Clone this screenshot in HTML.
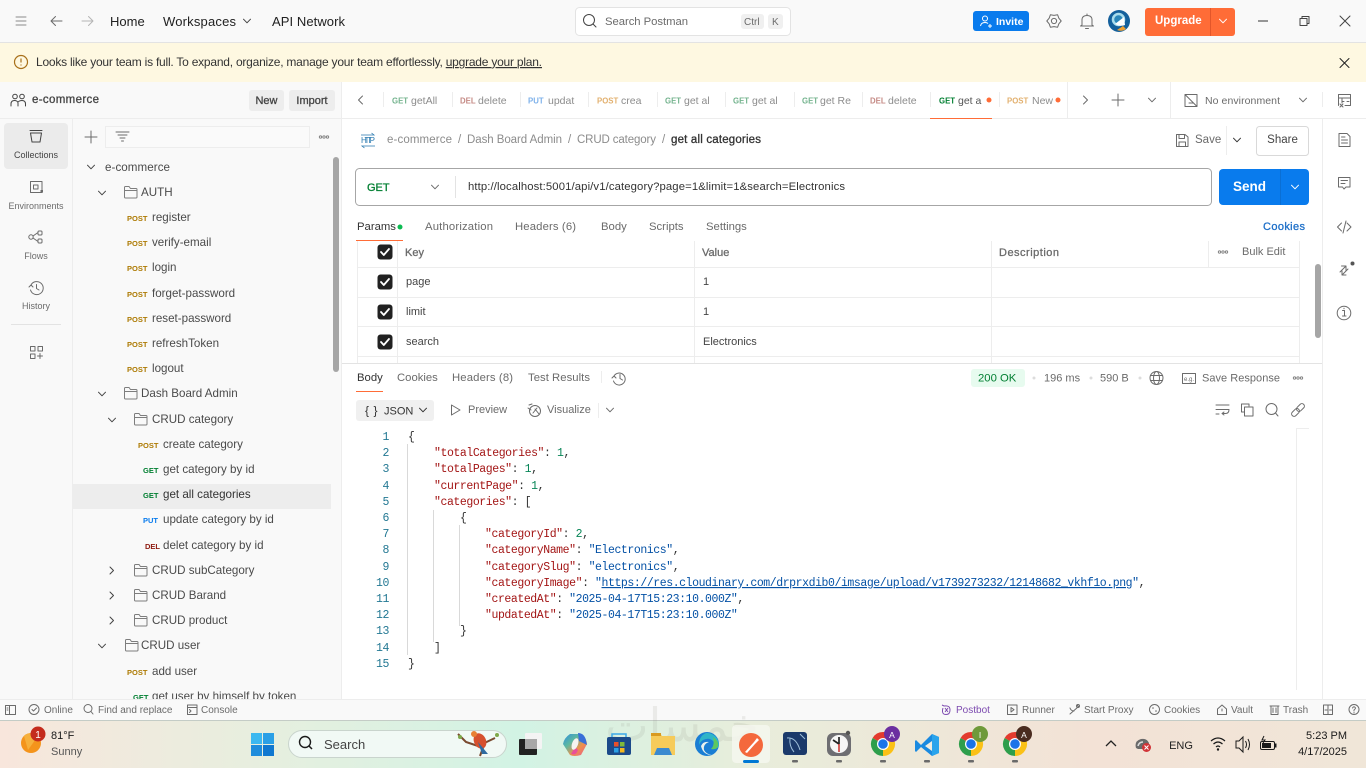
<!DOCTYPE html>
<html lang="en"><head><meta charset="utf-8"><title>Postman</title>
<style>
html,body{margin:0;padding:0;width:1366px;height:768px;overflow:hidden;background:#fff}
svg{display:block;font-family:"Liberation Sans",sans-serif}
.i{fill:none;stroke:#6b6b6b;stroke-width:1;stroke-linecap:round;stroke-linejoin:round}
.d{fill:none;stroke:#444;stroke-width:1;stroke-linecap:round;stroke-linejoin:round}
.med{stroke-width:.3px}
.tree{fill:#4a4a4a;font-size:11.6px}
.m{font-size:7.5px;font-weight:bold}
.post{fill:#ad7a03}.get{fill:#007f31}.put{fill:#097bed}.del{fill:#8e1a10}
.tab{font-size:10.5px;fill:#8c8c8c}.tm{font-size:7.8px;font-weight:bold}
.st{font-size:10px;fill:#6b6b6b}
.rail{font-size:9px;fill:#6b6b6b;text-anchor:middle}
.c{font-family:"Liberation Mono",monospace;font-size:11.5px;letter-spacing:-.43px}
.k{fill:#a31515}.s{fill:#0451a5}.n{fill:#098658}.p{fill:#333}
.ln{fill:#237893;text-anchor:end}
.line{stroke:#ededed;stroke-width:1}
</style></head><body>
<svg width="1366" height="768" viewBox="0 0 1366 768" xmlns="http://www.w3.org/2000/svg">
<defs>
<path id="chev" d="M-3.5 -1.8L0 1.8L3.5 -1.8" fill="none" stroke-linecap="round" stroke-linejoin="round"/>
<linearGradient id="tb" x1="0" x2="1" y1="0" y2="0"><stop offset="0" stop-color="#f8e6dc"/><stop offset=".2" stop-color="#e6efdf"/><stop offset=".38" stop-color="#d2f3e4"/><stop offset=".55" stop-color="#e8eddb"/><stop offset=".8" stop-color="#f3e2d6"/><stop offset="1" stop-color="#f0e6d8"/></linearGradient>
<linearGradient id="cop" x1="0" x2="1" y1="0" y2="1"><stop offset="0" stop-color="#2f8fe0"/><stop offset=".35" stop-color="#5cb8a0"/><stop offset=".65" stop-color="#f0904a"/><stop offset="1" stop-color="#e8559a"/></linearGradient>
<g id="folder"><path d="M0.5 3V1.5Q0.5 .5 1.5 .5H5L6.5 2.5H12Q13 2.5 13 3.5V11Q13 12 12 12H1.5Q.5 12 .5 11Z M.5 4.5H13" fill="none" stroke="#7d7d7d" stroke-width="1"/></g>
<g id="chrome"><path d="M0 0L-10.400 -6A12 12 0 0 1 10.400 -6Z" fill="#e33b2e"/><path d="M0 0L10.400 -6A12 12 0 0 1 0 12Z" fill="#fbc116"/><path d="M0 0L0 12A12 12 0 0 1 -10.400 -6Z" fill="#2e9e4b"/><circle r="6" fill="#fff"/><circle r="4.800" fill="#1a73e8"/></g>
<g id="check"><rect x="-7.500" y="-7.500" width="15" height="15" rx="3" fill="#212121"/><path d="M-4 0L-1.200 3L4 -3" fill="none" stroke="#fff" stroke-width="1.800" stroke-linecap="round" stroke-linejoin="round"/></g>
<g id="dots"><circle cx="-3.500" r="1.200" fill="none" stroke="#7d7d7d" stroke-width=".9"/><circle r="1.200" fill="none" stroke="#7d7d7d" stroke-width=".9"/><circle cx="3.500" r="1.200" fill="none" stroke="#7d7d7d" stroke-width=".9"/></g>
</defs>

<!-- backgrounds -->
<rect width="1366" height="768" fill="#fff"/>
<rect width="1366" height="42" fill="#f9f9f9"/>
<rect y="42" width="1366" height="1" fill="#e3e3e3"/>
<rect y="43" width="1366" height="39" fill="#fef8e1"/>
<rect y="82" width="341" height="617" fill="#f9f9f9"/>
<rect y="118" width="1366" height="1" fill="#ededed"/>
<rect x="72" y="119" width="1" height="580" fill="#ededed"/>
<rect x="341" y="82" width="1" height="617" fill="#ededed"/>
<rect x="1322" y="119" width="1" height="580" fill="#ededed"/>

<!-- top bar -->
<path class="i" style="stroke:#8c8c8c" d="M16 17H26M16 21H26M16 25H26"/>
<path class="i" d="M62 21H51M55.500 16.500L51 21L55.500 25.500"/>
<path class="i" style="stroke:#b5b5b5" d="M82 21H93M88.500 16.500L93 21L88.500 25.500"/>
<text x="110" y="26" font-size="13" fill="#212121">Home</text>
<text x="163" y="26" font-size="13" fill="#212121" textLength="73">Workspaces</text>
<use href="#chev" x="247" y="21" stroke="#444"/>
<text x="272" y="26" font-size="13" fill="#212121" textLength="73">API Network</text>
<rect x="575.500" y="7.500" width="215" height="28" rx="4" fill="#fff" stroke="#e3e3e3"/>
<circle cx="589" cy="20" r="5.500" class="d"/><path d="M593 24L596 27" class="d"/>
<text x="605" y="25" font-size="11.300" fill="#6b6b6b" textLength="83">Search Postman</text>
<rect x="741" y="14" width="23" height="15" rx="3" fill="#f0f0f0"/><text x="744" y="25" font-size="10" fill="#6b6b6b">Ctrl</text>
<rect x="768" y="14" width="15" height="15" rx="3" fill="#f0f0f0"/><text x="772" y="25" font-size="10" fill="#6b6b6b">K</text>
<rect x="973" y="11" width="56" height="20" rx="3" fill="#097bed"/>
<circle cx="985" cy="18.500" r="2.500" fill="none" stroke="#fff"/><path d="M980.500 26Q981 22.500 985 22.500Q987 22.500 988 23.500M988 26H992M990 24V28" fill="none" stroke="#fff"/>
<text x="996" y="25" font-size="10.500" font-weight="bold" fill="#fff">Invite</text>
<circle cx="1054" cy="21" r="2.600" class="i"/><path class="i" d="M1061.200 21L1058.850 23.800L1057.600 27.200L1054 26.600L1050.400 27.200L1049.150 23.800L1046.800 21L1049.150 18.200L1050.400 14.800L1054 15.400L1057.600 14.800L1058.850 18.200Z"/>
<path class="i" d="M1082 25V20Q1082 15.500 1087 15.500Q1092 15.500 1092 20V25L1093.500 26H1080.500ZM1085.500 28.500H1088.500M1087 15.500V14"/>
<circle cx="1119" cy="21" r="11" fill="#14609c"/><circle cx="1118.500" cy="19.500" r="5.500" fill="#2a86ba" stroke="#a8dcec" stroke-width="2.500"/><path d="M1115 24L1124 17L1125 25Q1120 27 1115 24Z" fill="#fff"/><path d="M1117 30L1123 26L1126 29Q1122 32 1117 30Z" fill="#f0a030"/>
<rect x="1145" y="8" width="90" height="28" rx="3" fill="#ff6c37"/><rect x="1210" y="8" width="1" height="28" fill="#e2562a"/>
<text x="1155" y="24" font-size="11.500" font-weight="bold" fill="#fff">Upgrade</text>
<use href="#chev" x="1223" y="21" stroke="#fff"/>
<path d="M1258 21H1268" stroke="#333"/>
<path class="d" d="M1300 18.500H1307V25.500H1300ZM1302 18.500V16.500H1309V23.500H1307"/>
<path class="d" d="M1340 16L1350 26M1350 16L1340 26"/>

<!-- banner -->
<circle cx="21" cy="62" r="6.500" fill="none" stroke="#a8701a" stroke-width="1.200"/><path d="M21 58.500V62.500M21 64.500V65.500" stroke="#a8701a" stroke-width="1.200"/>
<text x="36" y="66" font-size="12" fill="#333" textLength="506">Looks like your team is full. To expand, organize, manage your team effortlessly, <tspan text-decoration="underline">upgrade your plan.</tspan></text>
<path d="M1340 58.500L1349 67.500M1349 58.500L1340 67.500" class="d" style="stroke:#212121"/>

<!-- workspace header -->
<circle cx="15" cy="96.500" r="2.300" class="d"/><circle cx="22" cy="96.500" r="2.300" class="d"/><path class="d" d="M11 106V104Q11 100.500 14.500 100.500Q17 100.500 18 102.500V106M18.500 101.500Q20 100.500 22 100.500Q25.500 100.500 25.500 104V106"/>
<text x="32" y="103" font-size="11.500" class="med" stroke="#444" fill="#444" textLength="67">e-commerce</text>
<rect x="249" y="90" width="35" height="21" rx="3" fill="#ededed"/><text x="266.500" y="104" font-size="11" class="med" stroke="#444" fill="#444" text-anchor="middle">New</text>
<rect x="289" y="90" width="46" height="21" rx="3" fill="#ededed"/><text x="312" y="104" font-size="11" class="med" stroke="#444" fill="#444" text-anchor="middle">Import</text>

<!-- tab strip -->
<rect x="342" y="82" width="1024" height="36" fill="#fff"/>
<path class="i" d="M362.500 96L358.500 100L362.500 104"/>
<path stroke="#ededed" d="M383.500 92V107M452.500 92V107M520.500 92V107M588.500 92V107M657.500 92V107M725.500 92V107M794.500 92V107M862.500 92V107M930.500 92V107M999.500 92V107M1067.500 82V118M1170.500 82V118M1322.500 92V107"/>
<text x="392" y="103.500" class="tm" fill="#74b38e">GET</text><text x="411" y="104" class="tab">getAll</text>
<text x="460" y="103.500" class="tm" fill="#c58a85">DEL</text><text x="478" y="104" class="tab">delete</text>
<text x="528" y="103.500" class="tm" fill="#7cb0ea">PUT</text><text x="548" y="104" class="tab">updat</text>
<text x="597" y="103.500" class="tm" fill="#e2b06e">POST</text><text x="621" y="104" class="tab">crea</text>
<text x="665" y="103.500" class="tm" fill="#74b38e">GET</text><text x="684" y="104" class="tab">get al</text>
<text x="733" y="103.500" class="tm" fill="#74b38e">GET</text><text x="752" y="104" class="tab">get al</text>
<text x="802" y="103.500" class="tm" fill="#74b38e">GET</text><text x="820" y="104" class="tab">get Re</text>
<text x="870" y="103.500" class="tm" fill="#c58a85">DEL</text><text x="888" y="104" class="tab">delete</text>
<text x="939" y="103.500" class="tm" fill="#007f31">GET</text><text x="958" y="104" class="tab" style="fill:#555">get a</text><circle cx="989" cy="100" r="2.500" fill="#ff6c37"/>
<text x="1007" y="103.500" class="tm" fill="#e2b06e">POST</text><text x="1032" y="104" class="tab">New</text><circle cx="1058" cy="100" r="2.500" fill="#ff6c37"/>
<rect x="930" y="118" width="62" height="1" fill="#ff6c37"/>
<path class="i" d="M1083.500 96L1087.500 100L1083.500 104"/>
<path class="i" d="M1118 94V106M1112 100H1124"/>
<use href="#chev" x="1152" y="100" stroke="#6b6b6b"/>
<path class="i" d="M1185 94.500H1197V106.500H1185ZM1185 94.500L1197 106.500M1193 103H1189"/>
<text x="1205" y="104" font-size="10.500" fill="#6b6b6b" textLength="75">No environment</text>
<use href="#chev" x="1303" y="100" stroke="#6b6b6b"/>
<path class="i" d="M1338.500 94.500H1350.500V105.500H1345M1338.500 94.500V105.500M1338.500 98H1350.500M1342 101.500H1344M1347 101.500H1349M1342 98V103M1340 104L1343 107M1343 104L1340 107"/>

<!-- rail -->
<rect x="4" y="123" width="64" height="46" rx="4" fill="#ebebeb"/>
<path class="d" d="M30 130.500H42M30.500 133H41.500L40 142H32Z"/>
<text x="36" y="158" class="rail" style="fill:#444">Collections</text>
<path class="i" d="M30.500 181.500H42V191M42 192.500H30.500V181.500M33.500 185H38V189H33.500Z"/><rect x="40.500" y="190" width="2.500" height="2.500" fill="#6b6b6b"/>
<text x="36" y="209" class="rail">Environments</text>
<circle cx="31" cy="237" r="2.200" class="i"/><rect x="38" y="231" width="4" height="4" rx="1" class="i"/><rect x="38" y="239" width="4" height="4" rx="1" class="i"/><path class="i" d="M33 236L38 232.500M33 238L38 241.500"/>
<text x="36" y="259" class="rail">Flows</text>
<path class="i" d="M31 285A6.500 6.500 0 1 1 30.500 290M29 287L31 285L33 287M36.500 284.500V288.500L39 290"/>
<text x="36" y="309" class="rail">History</text>
<rect x="11" y="324" width="50" height="1" fill="#e3e3e3"/>
<path class="i" d="M30.500 346.500H35V351H30.500ZM38 346.500H42.500V351H38ZM30.500 354H35V358.500H30.500ZM40 353.500V358.500M37.500 356H42.500"/>

<!-- secondary toolbar -->
<path class="i" d="M91 131V143M85 137H97"/>
<rect x="105.500" y="126.500" width="204" height="21" fill="#fafafa" stroke="#ededed"/>
<path class="i" d="M116 132H129M118 135H127M120 138H125M121.500 141H123.500"/>
<use href="#dots" x="324" y="137"/>

<!-- tree -->
<rect x="73" y="484" width="258" height="25" fill="#ededed"/>
<use href="#chev" x="91" y="167" stroke="#444"/><text x="105" y="171" class="tree" textLength="65">e-commerce</text>
<use href="#chev" x="102" y="193" stroke="#444"/><use href="#folder" x="124" y="186"/><text x="141" y="196" class="tree">AUTH</text>
<text x="127" y="221" class="m post">POST</text><text x="152" y="221" class="tree">register</text>
<text x="127" y="246" class="m post">POST</text><text x="152" y="246" class="tree">verify-email</text>
<text x="127" y="271" class="m post">POST</text><text x="152" y="271" class="tree">login</text>
<text x="127" y="297" class="m post">POST</text><text x="152" y="297" class="tree">forget-password</text>
<text x="127" y="322" class="m post">POST</text><text x="152" y="322" class="tree">reset-password</text>
<text x="127" y="347" class="m post">POST</text><text x="152" y="347" class="tree">refreshToken</text>
<text x="127" y="372" class="m post">POST</text><text x="152" y="372" class="tree">logout</text>
<use href="#chev" x="102" y="394" stroke="#444"/><use href="#folder" x="124" y="387"/><text x="141" y="397" class="tree">Dash Board Admin</text>
<use href="#chev" x="112" y="420" stroke="#444"/><use href="#folder" x="134" y="413"/><text x="152" y="423" class="tree">CRUD category</text>
<text x="138" y="448" class="m post">POST</text><text x="163" y="448" class="tree">create category</text>
<text x="143" y="473" class="m get">GET</text><text x="163" y="473" class="tree">get category by id</text>
<text x="143" y="498" class="m get">GET</text><text x="163" y="498" class="tree" style="fill:#333">get all categories</text>
<text x="143" y="523" class="m put">PUT</text><text x="163" y="523" class="tree">update category by id</text>
<text x="145" y="549" class="m del">DEL</text><text x="163" y="549" class="tree">delet category by id</text>
<path class="d" d="M110 567L113.500 570.500L110 574"/><use href="#folder" x="134" y="564"/><text x="152" y="574" class="tree">CRUD subCategory</text>
<path class="d" d="M110 592L113.500 595.500L110 599"/><use href="#folder" x="134" y="589"/><text x="152" y="599" class="tree">CRUD Barand</text>
<path class="d" d="M110 617L113.500 620.500L110 624"/><use href="#folder" x="134" y="614"/><text x="152" y="624" class="tree">CRUD product</text>
<use href="#chev" x="102" y="646" stroke="#444"/><use href="#folder" x="125" y="639"/><text x="141" y="649" class="tree">CRUD user</text>
<text x="127" y="675" class="m post">POST</text><text x="152" y="675" class="tree">add user</text>
<text x="133" y="700" class="m get">GET</text><text x="152" y="700" class="tree">get user by himself by token</text>
<rect x="333" y="157" width="6" height="215" rx="3" fill="#a6a6a6"/>

<!-- breadcrumb -->
<text x="361" y="143" font-size="8" fill="#2a7ab0" textLength="14">HTTP</text>
<path d="M361 135H374L371.500 133M375 146H362L364.500 148" fill="none" stroke="#2a7ab0" stroke-width=".8"/>
<g font-size="11.500" fill="#8c8c8c">
<text x="387" y="143" textLength="65">e-commerce</text><text x="458" y="143">/</text>
<text x="467" y="143" textLength="95">Dash Board Admin</text><text x="568" y="143">/</text>
<text x="577" y="143" textLength="79">CRUD category</text><text x="662" y="143">/</text></g>
<text x="671" y="143" font-size="11.500" class="med" stroke="#333" fill="#333" textLength="90">get all categories</text>
<path class="i" d="M1176.500 134.500H1185L1188 137V146.500H1176.500ZM1179 134.500V138.500H1184.500V134.500M1179 146.500V142H1185.500V146.500"/>
<text x="1195" y="143" font-size="11.500" fill="#6b6b6b">Save</text>
<rect x="1226" y="126" width="1" height="29" fill="#ededed"/>
<use href="#chev" x="1237" y="140" stroke="#333"/>
<rect x="1256.500" y="126.500" width="52" height="29" rx="3" fill="#fff" stroke="#d9d9d9"/>
<text x="1282.500" y="143" font-size="11.500" fill="#444" text-anchor="middle">Share</text>

<!-- url bar -->
<rect x="355.500" y="168.500" width="856" height="37" rx="4" fill="#fff" stroke="#a6a6a6"/>
<text x="367" y="191" font-size="11" class="med" stroke="#007f31" fill="#007f31">GET</text>
<use href="#chev" x="435" y="187" stroke="#6b6b6b"/>
<rect x="455" y="176" width="1" height="22" fill="#e3e3e3"/>
<text x="468" y="190" font-size="11.300" fill="#333" textLength="377">http://localhost:5001/api/v1/category?page=1&amp;limit=1&amp;search=Electronics</text>
<rect x="1219" y="169" width="90" height="36" rx="4" fill="#097bed"/><rect x="1280" y="169" width="1" height="36" fill="#0a6fd4"/>
<text x="1233" y="191" font-size="13.500" font-weight="bold" fill="#fff">Send</text>
<use href="#chev" x="1295" y="187" stroke="#fff"/>

<!-- request tabs -->
<g font-size="11.300" fill="#6b6b6b">
<text x="357" y="230" fill="#333">Params</text><circle cx="400" cy="227" r="2.500" fill="#0cbb52"/>
<text x="425" y="230" textLength="68">Authorization</text>
<text x="515" y="230" textLength="61">Headers (6)</text>
<text x="601" y="230">Body</text><text x="649" y="230">Scripts</text><text x="706" y="230">Settings</text></g>
<text x="1263" y="230" font-size="11" class="med" stroke="#1d6fc8" fill="#1d6fc8" textLength="42">Cookies</text>
<rect x="356" y="240" width="47" height="1" fill="#ff6c37"/>

<!-- params table -->
<path class="line" d="M357 267.500H1299M357 297.500H1299M357 326.500H1299M357 356.500H1299M357.500 241V363M397.500 241V363M694.500 241V363M991.500 241V363M1208.500 241V267M1299.500 241V363"/>
<use href="#check" x="385" y="252"/><use href="#check" x="385" y="282"/><use href="#check" x="385" y="312"/><use href="#check" x="385" y="342"/>
<g font-size="11" class="med" stroke="#6b6b6b" fill="#6b6b6b"><text x="405" y="256">Key</text><text x="702" y="256">Value</text><text x="999" y="256" textLength="60">Description</text></g>
<use href="#dots" x="1223" y="252"/>
<text x="1242" y="255" font-size="11" fill="#6b6b6b">Bulk Edit</text>
<g font-size="11" fill="#444"><text x="406" y="285">page</text><text x="703" y="285">1</text>
<text x="406" y="315">limit</text><text x="703" y="315">1</text>
<text x="406" y="345">search</text><text x="703" y="345">Electronics</text></g>
<rect x="1315" y="264" width="6" height="74" rx="3" fill="#a6a6a6"/>

<!-- right icons -->
<path class="i" d="M1339 133.500H1347L1350 136.500V146.500H1339ZM1341.500 137H1345M1341.500 140H1347.500M1341.500 143H1347.500"/>
<path class="i" d="M1338.500 177.500H1350V187H1346L1344 189L1342.500 187H1338.500ZM1341 180.500H1347.500M1341 183.500H1345"/>
<path class="i" d="M1341.500 223L1337.500 227L1341.500 231M1347 223L1351 227L1347 231M1346 221L1343 233"/>
<path class="i" d="M1340 272L1346 266M1341.500 266H1346V270.500M1348 269L1342 275M1342 271V275H1346"/><circle cx="1352.500" cy="263.500" r="2" fill="#555"/>
<circle cx="1344" cy="313" r="6.800" class="i"/><path class="i" d="M1342.500 310.500H1344.500V316M1342.500 316H1346M1344 308.300V308.800"/>

<!-- response header -->
<rect x="342" y="363" width="980" height="336" fill="#fff"/>
<rect x="342" y="363" width="980" height="1" fill="#e3e3e3"/>
<g font-size="11.300" fill="#6b6b6b">
<text x="357" y="381" fill="#333">Body</text><text x="397" y="381">Cookies</text>
<text x="452" y="381" textLength="61">Headers (8)</text><text x="528" y="381" textLength="62">Test Results</text></g>
<rect x="356" y="391" width="27" height="1" fill="#ff6c37"/>
<rect x="601" y="371" width="1" height="12" fill="#ededed"/>
<path class="i" d="M614 376A6 6 0 1 1 613.500 381M612 378L614 376L616 378M620 374.500V378.500L622.500 380"/>
<rect x="971" y="369" width="54" height="18" rx="3" fill="#e7fbef"/>
<text x="978" y="381.500" font-size="11.300" fill="#007f31">200 OK</text>
<circle cx="1034" cy="378" r="1.500" fill="#dcdcdc"/>
<text x="1044" y="381.500" font-size="11" fill="#6b6b6b">196 ms</text>
<circle cx="1091" cy="378" r="1.500" fill="#dcdcdc"/>
<text x="1100" y="381.500" font-size="11" fill="#6b6b6b">590 B</text>
<circle cx="1140" cy="378" r="1.500" fill="#dcdcdc"/>
<circle cx="1156.500" cy="378" r="6.500" class="i"/><ellipse cx="1156.500" cy="378" rx="3" ry="6.500" class="i"/><path class="i" d="M1150.500 375.500H1162.500M1150.500 380.500H1162.500"/>
<rect x="1182.500" y="373.500" width="13" height="10" class="i"/><text x="1184" y="381" font-size="6" fill="#6b6b6b">e.g.</text>
<text x="1202" y="381.500" font-size="11" fill="#6b6b6b" textLength="78">Save Response</text>
<use href="#dots" x="1298" y="378"/>

<!-- body toolbar -->
<rect x="356" y="400" width="78" height="21" rx="3" fill="#f0f0f0"/>
<text x="365" y="414.500" font-size="12" fill="#333">{</text><text x="373.500" y="414.500" font-size="12" fill="#333">}</text>
<text x="384" y="414.500" font-size="11" fill="#333">JSON</text>
<use href="#chev" x="423" y="410" stroke="#333"/>
<path class="i" d="M451.500 405L460 410L451.500 415Z"/>
<text x="468" y="413" font-size="11" fill="#6b6b6b">Preview</text>
<circle cx="535" cy="411" r="5.500" class="i"/><path class="i" d="M529 405L532 404M535 409L539 414M533 413L537 408M528 408L531 410"/>
<text x="547" y="413" font-size="11" fill="#6b6b6b">Visualize</text>
<rect x="598" y="403" width="1" height="15" fill="#ededed"/>
<use href="#chev" x="610" y="410" stroke="#6b6b6b"/>
<path class="i" d="M1216 405H1229M1216 409.500H1229Q1229 413.500 1225.500 413.500H1222M1224 412L1222 413.500L1224 415M1216 414H1219"/>
<path class="i" d="M1241.500 404H1249V406M1241.500 404V412H1244M1244.500 407H1253V416H1244.500Z"/>
<circle cx="1271.500" cy="409" r="5.500" class="i"/><path class="i" d="M1275.500 413L1278 416"/>
<g transform="rotate(-45 1298 410)"><rect x="1290" y="407.500" width="9" height="5" rx="2.500" class="i"/><rect x="1297" y="407.500" width="9" height="5" rx="2.500" class="i"/></g>
<path d="M1309 428.500H1296.500V690" fill="none" stroke="#ededed"/>

<!-- code -->
<path d="M407.500 444V655M433.500 510V642M459.500 525V626" fill="none" stroke="#d9d9d9"/>
<g class="c ln">
<text x="389" y="440">1</text><text x="389" y="456">2</text><text x="389" y="472">3</text><text x="389" y="489">4</text><text x="389" y="505">5</text><text x="389" y="521">6</text><text x="389" y="537">7</text><text x="389" y="553">8</text><text x="389" y="570">9</text><text x="389" y="586">10</text><text x="389" y="602">11</text><text x="389" y="618">12</text><text x="389" y="634">13</text><text x="389" y="651">14</text><text x="389" y="667">15</text>
</g>
<g class="c">
<text x="408" y="440" class="p">{</text>
<text x="434" y="456"><tspan class="k">"totalCategories"</tspan><tspan class="p">: </tspan><tspan class="n">1</tspan><tspan class="p">,</tspan></text>
<text x="434" y="472"><tspan class="k">"totalPages"</tspan><tspan class="p">: </tspan><tspan class="n">1</tspan><tspan class="p">,</tspan></text>
<text x="434" y="489"><tspan class="k">"currentPage"</tspan><tspan class="p">: </tspan><tspan class="n">1</tspan><tspan class="p">,</tspan></text>
<text x="434" y="505"><tspan class="k">"categories"</tspan><tspan class="p">: [</tspan></text>
<text x="460" y="521" class="p">{</text>
<text x="485" y="537"><tspan class="k">"categoryId"</tspan><tspan class="p">: </tspan><tspan class="n">2</tspan><tspan class="p">,</tspan></text>
<text x="485" y="553"><tspan class="k">"categoryName"</tspan><tspan class="p">: </tspan><tspan class="s">"Electronics"</tspan><tspan class="p">,</tspan></text>
<text x="485" y="570"><tspan class="k">"categorySlug"</tspan><tspan class="p">: </tspan><tspan class="s">"electronics"</tspan><tspan class="p">,</tspan></text>
<text x="485" y="586"><tspan class="k">"categoryImage"</tspan><tspan class="p">: </tspan><tspan class="s">"</tspan><tspan class="s" text-decoration="underline">https://res.cloudinary.com/drprxdib0/imsage/upload/v1739273232/12148682_vkhf1o.png</tspan><tspan class="s">"</tspan><tspan class="p">,</tspan></text>
<text x="485" y="602"><tspan class="k">"createdAt"</tspan><tspan class="p">: </tspan><tspan class="s">"2025-04-17T15:23:10.000Z"</tspan><tspan class="p">,</tspan></text>
<text x="485" y="618"><tspan class="k">"updatedAt"</tspan><tspan class="p">: </tspan><tspan class="s">"2025-04-17T15:23:10.000Z"</tspan></text>
<text x="460" y="634" class="p">}</text>
<text x="434" y="651" class="p">]</text>
<text x="408" y="667" class="p">}</text>
</g>

<!-- status bar -->
<rect y="699" width="1366" height="21" fill="#f9f9f9"/>
<rect y="699" width="1366" height="1" fill="#ededed"/>
<path class="i" d="M5.500 705.500H15.500V714.500H5.500ZM9.500 705.500V714.500M7 708H8M7 710H8"/>
<circle cx="34" cy="709.500" r="5" class="i"/><path class="i" d="M32 709.500L33.500 711L36.500 708"/>
<text x="44" y="713" class="st">Online</text>
<circle cx="88" cy="708.500" r="4" class="i"/><path class="i" d="M91 711.500L93 714"/>
<text x="98" y="713" class="st">Find and replace</text>
<path class="i" d="M187.500 705H197V714.500H187.500ZM187.500 707.500H197M189.500 709.500L191 711L189.500 712.500"/>
<text x="201" y="713" class="st">Console</text>
<path d="M942 705L944 706Q950 705 950 710Q950 714.500 946 714.500Q942 714.500 942.500 710L943 708M945 708L948 712M948 708L945 712" fill="none" stroke="#7d4bb0"/>
<text x="956" y="713" class="st" style="fill:#7d4bb0">Postbot</text>
<path class="i" d="M1007.500 705H1017V714.500H1007.500ZM1011 707.500L1014 709.700L1011 712Z"/>
<text x="1022" y="713" class="st">Runner</text>
<path class="i" d="M1070 714L1078 707M1070 708Q1071 711 1074 711M1077 705L1079 707"/><circle cx="1078" cy="706" r="1.500" class="i"/>
<text x="1084" y="713" class="st">Start Proxy</text>
<circle cx="1154.500" cy="709.500" r="5" class="i"/><circle cx="1153" cy="708" r=".8" fill="#6b6b6b"/><circle cx="1156" cy="711" r=".8" fill="#6b6b6b"/>
<text x="1164" y="713" class="st">Cookies</text>
<path class="i" d="M1217.500 709L1222 705L1226.500 709V714.500H1217.500ZM1222 709V711"/>
<text x="1231" y="713" class="st">Vault</text>
<path class="i" d="M1270 706H1279M1271 706V714.500H1278V706M1273 708V712.500M1276 708V712.500"/>
<text x="1283" y="713" class="st">Trash</text>
<path class="i" d="M1323.500 705H1332.500V714.500H1323.500ZM1328 705V714.500M1325 710H1327M1329.500 710H1331.500"/>
<circle cx="1354" cy="709.500" r="5" class="i"/><path class="i" d="M1352.500 708Q1354 705.500 1355.500 708Q1355.500 709 1354 710V711M1354 712.500V713"/>

<!-- taskbar -->
<rect y="720" width="1366" height="48" fill="url(#tb)"/>
<rect y="720" width="1366" height="1" fill="#c4ccc6"/>
<text x="682" y="741" font-size="46" fill="#8a8a80" opacity=".13" text-anchor="middle" font-family="'DejaVu Sans',sans-serif" direction="rtl">خمسات</text>
<circle cx="31" cy="743" r="10" fill="#f4941c"/><path d="M24 736A10 10 0 0 1 38 736L28 750Z" fill="#f6b03c"/>
<circle cx="38" cy="734" r="7.500" fill="#c42b1c"/><text x="38" y="738" font-size="10" fill="#fff" text-anchor="middle">1</text>
<text x="51" y="739" font-size="11" fill="#1a1a1a">81°F</text>
<text x="51" y="755" font-size="11" fill="#555">Sunny</text>
<rect x="251" y="733" width="11" height="11" fill="#3cb8f0"/><rect x="263" y="733" width="11" height="11" fill="#2aa0e6"/><rect x="251" y="745" width="11" height="11" fill="#1f8ddc"/><rect x="263" y="745" width="11" height="11" fill="#0f78d0"/>
<rect x="288.500" y="730.500" width="218" height="27" rx="13.500" fill="#f1f9f5" stroke="#c9d4cd"/>
<circle cx="305" cy="742" r="5.500" fill="none" stroke="#1a1a1a" stroke-width="1.400"/><path d="M309 746L312 749" stroke="#1a1a1a" stroke-width="1.500"/>
<text x="324" y="749" font-size="13" fill="#444">Search</text>
<path d="M458 734L466 742L478 746L495 738M484 745L480 756" fill="none" stroke="#7a4a30" stroke-width="2"/>
<ellipse cx="480" cy="741" rx="6" ry="8" fill="#d6502e" transform="rotate(-25 480 741)"/><path d="M478 742L488 754L482 754Z" fill="#2f6aa0"/><circle cx="474" cy="734" r="3" fill="#e88034"/>
<circle cx="460" cy="737" r="2" fill="#7fa84a"/><circle cx="497" cy="735" r="2" fill="#7fa84a"/>
<!-- task view -->
<rect x="519" y="739" width="18" height="16" rx="1" fill="#222"/><rect x="525" y="733" width="17" height="16" rx="1" fill="#f4f4f4"/><rect x="525" y="739" width="12" height="10" fill="#a8a8a8"/>
<!-- copilot -->
<path d="M570 734H582Q587 740 587 744L581 755Q574 757 570 755L563 744Q564 738 570 734Z" fill="url(#cop)"/><path d="M578 733Q584 733 586 740L587 745L579 741Z" fill="#3a6fd8"/><path d="M571 754Q576 756 578 750L575 747Z" fill="#e8509a"/><ellipse cx="575" cy="744" rx="3" ry="6" transform="rotate(20 575 744)" fill="#f6f4f0"/>
<!-- store -->
<rect x="607" y="737" width="24" height="18" rx="2" fill="#1b4a8a"/><path d="M612 737V734H626V737" fill="none" stroke="#3ba8e8" stroke-width="1.500"/>
<rect x="614" y="742" width="4.500" height="4.500" fill="#e8502a"/><rect x="620" y="742" width="4.500" height="4.500" fill="#7fba3a"/><rect x="614" y="748" width="4.500" height="4.500" fill="#2aa0e6"/><rect x="620" y="748" width="4.500" height="4.500" fill="#f4b820"/>
<!-- files -->
<path d="M651 733H660L662 736H675V755H651Z" fill="#f6cb5a"/><rect x="651" y="733" width="10" height="3" fill="#d99a20"/><path d="M657 748H669L672 755H654Z" fill="#3b8ad0"/>
<!-- edge -->
<circle cx="707" cy="744" r="12" fill="#1a7ed4"/><path d="M706 733A12 12 0 0 1 719 745Q718 750 711 749Q716 745 713 741Q709 737 703 740Q700 742 699 745Q699 736 706 733Z" fill="#2fb5c8"/><path d="M713 737Q719 741 718 746Q717 750 711 749Q715 745 713 737Z" fill="#5dc85f"/><path d="M701 746Q703 741 709 742Q703 744 704 750Q706 754 712 755Q703 755 701 746Z" fill="#e8f2ee"/>
<!-- postman -->
<rect x="732" y="725" width="38" height="38" rx="4" fill="#f5f7ee" opacity=".85"/>
<circle cx="751" cy="745" r="12" fill="#f4683c"/><path d="M745 752L754 742L757 738L759 740L755 744L747 753Z" fill="#fff"/>
<rect x="743" y="760" width="16" height="3" rx="1.500" fill="#0078d4"/>
<!-- mysql -->
<rect x="783" y="732" width="24" height="23" rx="3" fill="#1b3a6b"/><path d="M787 738Q796 737 800 750M790 738Q789 746 794 752M800 734L805 739" fill="none" stroke="#9fc0da" stroke-width="1"/>
<!-- clock -->
<rect x="827" y="733" width="24" height="23" rx="6" fill="#6e6e72"/><circle cx="839" cy="744" r="9" fill="#f6f6f6"/><path d="M839 744V737M839 744L833 740" stroke="#222" stroke-width="1.700" fill="none"/><path d="M839 744V752" stroke="#c9302c" stroke-width="1.500"/><circle cx="848" cy="733" r="2.200" fill="#555"/>
<!-- chrome / vscode -->
<use href="#chrome" x="883" y="744"/><circle cx="892" cy="734" r="8" fill="#6b2fa0"/><text x="892" y="738" font-size="8.500" fill="#fff" text-anchor="middle">A</text>
<path d="M932 734L921 745L916 740L915 741V751L916 752L921 747L932 756L939 753V737Z" fill="#1a8ae0"/><path d="M932 741V751L925 746Z" fill="#f0ede0"/><path d="M932 734L939 737V753L932 756Z" fill="#2aa4ec"/>
<use href="#chrome" x="971" y="744"/><circle cx="980" cy="734" r="8" fill="#6f9a3a"/><text x="980" y="738" font-size="8.500" fill="#fff" text-anchor="middle">I</text>
<use href="#chrome" x="1015" y="744"/><circle cx="1024" cy="734" r="8" fill="#4a2c20"/><text x="1024" y="738" font-size="8.500" fill="#fff" text-anchor="middle">A</text>
<g fill="#6a6a6a"><rect x="792" y="760" width="6" height="2.500" rx="1"/><rect x="836" y="760" width="6" height="2.500" rx="1"/><rect x="880" y="760" width="6" height="2.500" rx="1"/><rect x="924" y="760" width="6" height="2.500" rx="1"/><rect x="968" y="760" width="6" height="2.500" rx="1"/><rect x="1012" y="760" width="6" height="2.500" rx="1"/></g>
<!-- tray -->
<path d="M1106 746L1111 741L1116 746" fill="none" stroke="#222" stroke-width="1.300"/>
<path d="M1136 748Q1134 741 1141 739Q1147 738 1149 743L1148 749H1138Z" fill="#6a6a6a"/><path d="M1138 746Q1139 742 1143 742" fill="none" stroke="#ddd" stroke-width="1.500"/><circle cx="1146.500" cy="747.500" r="4.500" fill="#d13438"/><path d="M1144.500 745.500L1148.500 749.500M1148.500 745.500L1144.500 749.500" stroke="#fff"/>
<text x="1181" y="749" font-size="11" fill="#222" text-anchor="middle">ENG</text>
<path d="M1211 741Q1218 735 1225 741M1213.500 744Q1218 740 1222.500 744M1216 747Q1218 745 1220 747" fill="none" stroke="#1a1a1a" stroke-width="1.200"/><circle cx="1218" cy="749.500" r="1.200" fill="#1a1a1a"/>
<path d="M1236 741H1239L1243 737V752L1239 748H1236ZM1245.500 741Q1247.500 744.500 1245.500 748M1248 739Q1251 744.500 1248 750" fill="none" stroke="#1a1a1a" stroke-width="1"/>
<rect x="1260.500" y="741.500" width="14" height="8" rx="1.500" fill="none" stroke="#1a1a1a"/><rect x="1262" y="743" width="9" height="5" fill="#1a1a1a"/><rect x="1275" y="743.500" width="1.500" height="4" fill="#1a1a1a"/><path d="M1264 736L1262 740H1265L1263 743" fill="none" stroke="#1a1a1a"/>
<text x="1347" y="739" font-size="11" fill="#1a1a1a" text-anchor="end">5:23 PM</text>
<text x="1347" y="755" font-size="11" fill="#1a1a1a" text-anchor="end">4/17/2025</text>
</svg>
</body></html>
